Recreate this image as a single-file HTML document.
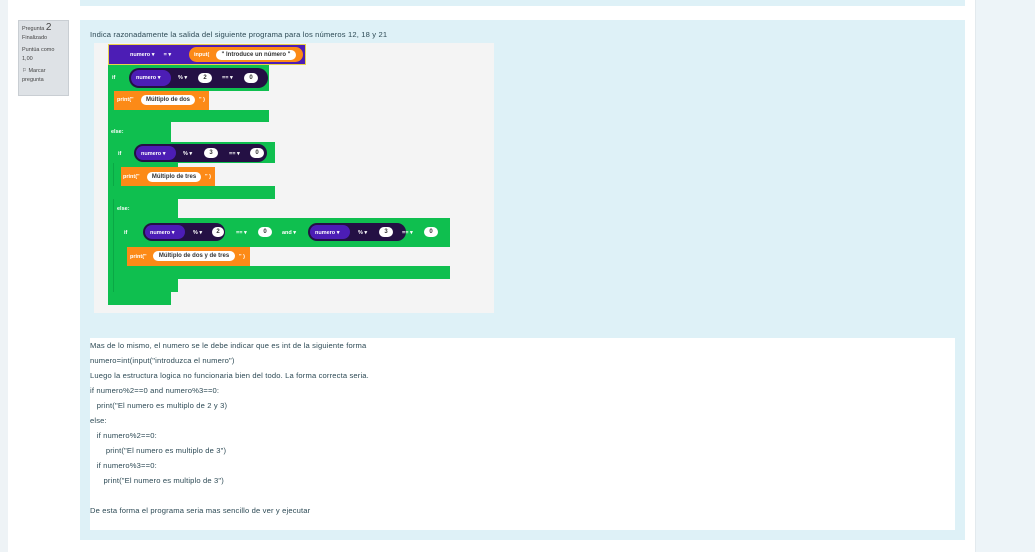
<!DOCTYPE html>
<html><head><meta charset="utf-8"><style>
body{margin:0;width:1035px;height:552px;position:relative;overflow:hidden;background:#fff;font-family:"Liberation Sans",sans-serif}
.a{position:absolute;box-sizing:border-box}
.g{background:#0fbf4f}
.o{background:#fc8a17}
.p{background:#4c1db5}
.d{background:#241044;border-radius:12px}
.pill{position:absolute;background:#fff;border-radius:8px;color:#333;font-size:6px;font-weight:bold;text-align:center;line-height:10px;height:10px}
.t{position:absolute;color:#fff;font-size:5.5px;font-weight:bold;white-space:nowrap;line-height:8px}
.ans div{height:15px;font-size:7.6px;letter-spacing:0.15px;color:#2d4a55;line-height:15px;white-space:pre}
</style></head><body>
<div class="a" style="left:0;top:0;width:8px;height:552px;background:#eef3f6"></div>
<div class="a" style="left:975px;top:0;width:60px;height:552px;background:#edf4f8;border-left:1px solid #e3eaee"></div>
<div class="a" style="left:80px;top:0;width:885px;height:6px;background:#def1f7"></div>
<div class="a" style="left:18px;top:20px;width:51px;height:76px;background:#dee2e6;border:1px solid #c9ced3;font-size:5.5px;color:#444;padding:2px 3px;line-height:9px">
<div>Pregunta <span style="font-size:10px">2</span></div><div>Finalizado</div><div style="margin-top:3px">Puntúa como<br>1,00</div><div style="margin-top:3px">⚐ Marcar<br>pregunta</div></div>
<div class="a" style="left:80px;top:20px;width:885px;height:520px;background:#def1f7"></div>
<div class="a" style="left:90px;top:30px;font-size:7.6px;letter-spacing:0.15px;color:#2d4a55;white-space:nowrap">Indica razonadamente la salida del siguiente programa para los números 12, 18 y 21</div>
<div class="a" style="left:94px;top:43px;width:400px;height:270px;background:#f4f4f4"></div>
<div class="a g" style="left:108px;top:65px;width:63px;height:240px"></div>
<div class="a p" style="left:108px;top:44px;width:198px;height:21px;border:1px solid #e8d24a"></div>
<div class="t" style="left:130px;top:51px">numero ▾ &nbsp;&nbsp;&nbsp;&nbsp; = ▾</div>
<div class="a o" style="left:189px;top:47px;width:114px;height:15px;border-radius:8px"></div>
<div class="t" style="left:194px;top:51px">input(</div>
<div class="pill" style="left:216px;top:49.5px;width:80px">" Introduce un número "</div>
<div class="a g" style="left:108px;top:65px;width:161px;height:26px"></div>
<div class="t" style="left:112px;top:74px">if</div>
<div class="a d" style="left:129px;top:68px;width:139px;height:20px"></div>
<div class="a p" style="left:131px;top:70px;width:40px;height:16px;border-radius:8px"></div>
<div class="t" style="left:136px;top:74px">numero ▾</div>
<div class="t" style="left:178px;top:74px">% ▾</div>
<div class="pill" style="left:198px;top:73px;width:14px">2</div>
<div class="t" style="left:222px;top:74px">== ▾</div>
<div class="pill" style="left:244px;top:73px;width:14px">0</div>
<div class="a o" style="left:114px;top:91px;width:95px;height:19px"></div>
<div class="t" style="left:117px;top:96px">print("</div>
<div class="pill" style="left:141px;top:95px;width:54px">Múltiplo de dos</div>
<div class="t" style="left:199px;top:96px">" )</div>
<div class="a g" style="left:108px;top:110px;width:161px;height:12px"></div>
<div class="t" style="left:111px;top:128px">else:</div>
<div class="a g" style="left:113px;top:142px;width:65px;height:150px;border-left:1px solid #0aa845"></div>
<div class="a g" style="left:113px;top:142px;width:162px;height:21px"></div>
<div class="t" style="left:118px;top:150px">if</div>
<div class="a d" style="left:134px;top:144px;width:133px;height:18px"></div>
<div class="a p" style="left:136px;top:146px;width:40px;height:14px;border-radius:7px"></div>
<div class="t" style="left:141px;top:150px">numero ▾</div>
<div class="t" style="left:183px;top:150px">% ▾</div>
<div class="pill" style="left:204px;top:148px;width:14px">3</div>
<div class="t" style="left:229px;top:150px">== ▾</div>
<div class="pill" style="left:250px;top:148px;width:14px">0</div>
<div class="a o" style="left:121px;top:167px;width:94px;height:19px"></div>
<div class="t" style="left:123px;top:173px">print("</div>
<div class="pill" style="left:147px;top:172px;width:54px">Múltiplo de tres</div>
<div class="t" style="left:205px;top:173px">" )</div>
<div class="a g" style="left:113px;top:186px;width:162px;height:13px"></div>
<div class="t" style="left:117px;top:205px">else:</div>
<div class="a g" style="left:120px;top:218px;width:330px;height:29px"></div>
<div class="t" style="left:124px;top:229px">if</div>
<div class="a d" style="left:143px;top:223px;width:82px;height:18px"></div>
<div class="a p" style="left:145px;top:225px;width:40px;height:14px;border-radius:7px"></div>
<div class="t" style="left:150px;top:229px">numero ▾</div>
<div class="t" style="left:193px;top:229px">% ▾</div>
<div class="pill" style="left:212px;top:227px;width:12px">2</div>
<div class="t" style="left:236px;top:229px">== ▾</div>
<div class="pill" style="left:258px;top:227px;width:14px">0</div>
<div class="t" style="left:282px;top:229px">and ▾</div>
<div class="a d" style="left:308px;top:223px;width:98px;height:18px"></div>
<div class="a p" style="left:310px;top:225px;width:40px;height:14px;border-radius:7px"></div>
<div class="t" style="left:315px;top:229px">numero ▾</div>
<div class="t" style="left:358px;top:229px">% ▾</div>
<div class="pill" style="left:379px;top:227px;width:14px">3</div>
<div class="t" style="left:402px;top:229px">== ▾</div>
<div class="pill" style="left:424px;top:227px;width:14px">0</div>
<div class="a o" style="left:127px;top:247px;width:123px;height:19px"></div>
<div class="t" style="left:130px;top:253px">print("</div>
<div class="pill" style="left:153px;top:251px;width:82px">Múltiplo de dos y de tres</div>
<div class="t" style="left:239px;top:253px">" )</div>
<div class="a g" style="left:120px;top:266px;width:330px;height:13px"></div>
<div class="a g" style="left:120px;top:247px;width:7px;height:32px"></div>
<div class="a ans" style="left:90px;top:338px;width:865px;height:192px;background:#fff;padding-top:0;padding-left:0">
<div>Mas de lo mismo, el numero se le debe indicar que es int de la siguiente forma</div>
<div>numero=int(input("introduzca el numero")</div>
<div>Luego la estructura logica no funcionaria bien del todo. La forma correcta seria.</div>
<div>if numero%2==0 and numero%3==0:</div>
<div>   print("El numero es multiplo de 2 y 3)</div>
<div>else:</div>
<div>   if numero%2==0:</div>
<div>       print("El numero es multiplo de 3")</div>
<div>   if numero%3==0:</div>
<div>      print("El numero es multiplo de 3")</div>
<div> </div>
<div>De esta forma el programa seria mas sencillo de ver y ejecutar</div>
</div>
</body></html>
